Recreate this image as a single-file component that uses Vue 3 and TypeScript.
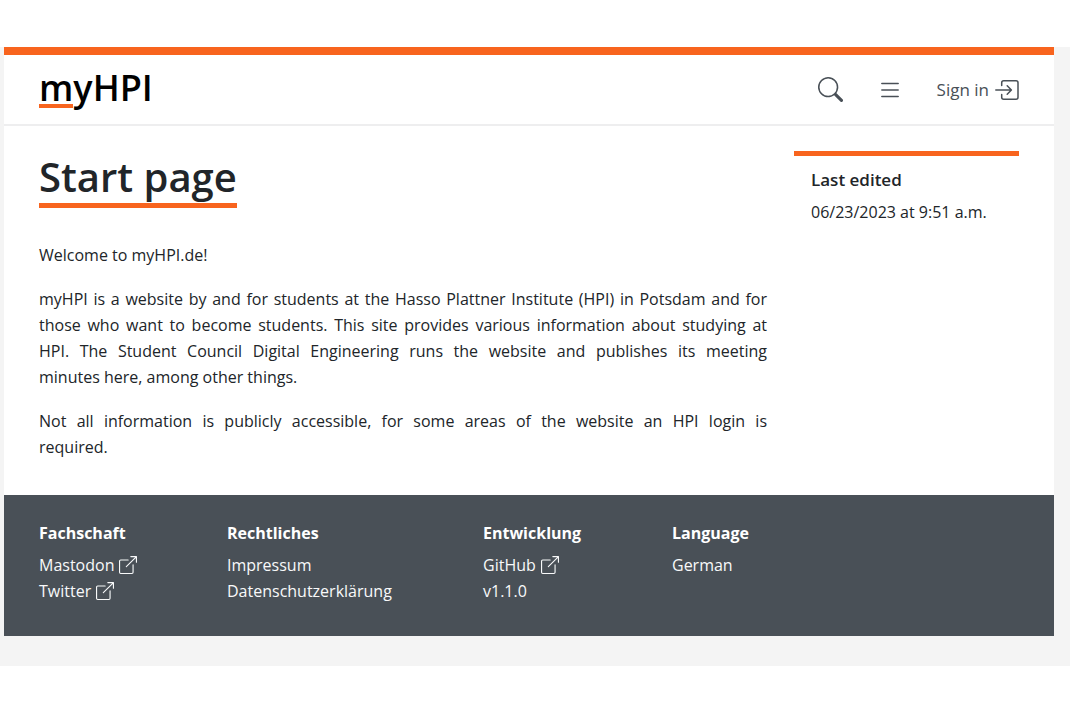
<script setup lang="ts">
interface FooterLink {
  label: string
  external?: boolean
}

interface FooterGroup {
  title: string
  links: FooterLink[]
}

const paragraphs: string[][] = [
  ['Welcome to myHPI.de!'],
  [
    'myHPI is a website by and for students at the Hasso Plattner Institute (HPI) in Potsdam and for those who want to become students. This site provides various information about studying at HPI. The Student Council Digital Engineering runs the website and publishes its meeting',
    'minutes here, among other things.',
  ],
  [
    'Not all information is publicly accessible, for some areas of the website an HPI login is',
    'required.',
  ],
]

const footerGroups: FooterGroup[] = [
  {
    title: 'Fachschaft',
    links: [
      { label: 'Mastodon', external: true },
      { label: 'Twitter', external: true },
    ],
  },
  {
    title: 'Rechtliches',
    links: [{ label: 'Impressum' }, { label: 'Datenschutzerklärung' }],
  },
  {
    title: 'Entwicklung',
    links: [{ label: 'GitHub', external: true }, { label: 'v1.1.0' }],
  },
  { title: 'Language', links: [{ label: 'German' }] },
]
</script>

<template>
  <div class="backdrop">
    <div class="page">
      <header class="header">
        <a class="logo" href="#" aria-label="myHPI"><span class="logo-mark">m</span>yHPI</a>
        <nav class="actions">
          <button class="icon-button" type="button" aria-label="Search">
            <svg width="25" height="25" viewBox="0 0 16 16" fill="currentColor" aria-hidden="true">
              <path d="M11.742 10.344a6.500 6.500 0 1 0-1.397 1.398h-.001c.030.040.062.078.098.115l3.850 3.850a1 1 0 0 0 1.415-1.414l-3.850-3.850a1.007 1.007 0 0 0-.115-.100zM12 6.500a5.500 5.500 0 1 1-11 0 5.500 5.500 0 0 1 11 0z" />
            </svg>
          </button>
          <button class="icon-button" type="button" aria-label="Menu">
            <svg width="26" height="26" viewBox="0 0 16 16" fill="currentColor" aria-hidden="true">
              <path fill-rule="evenodd" d="M2.500 12a.5.5 0 0 1 .5-.5h10a.5.5 0 0 1 0 1H3a.5.5 0 0 1-.5-.5zm0-4a.5.5 0 0 1 .5-.5h10a.5.5 0 0 1 0 1H3a.5.5 0 0 1-.5-.5zm0-4a.5.5 0 0 1 .5-.5h10a.5.5 0 0 1 0 1H3a.5.5 0 0 1-.5-.5z" />
            </svg>
          </button>
          <a class="sign-in" href="#">
            Sign in
            <svg
              width="24"
              height="20"
              viewBox="0 0 24 20"
              fill="none"
              stroke="currentColor"
              stroke-width="1.5"
              stroke-linecap="round"
              stroke-linejoin="round"
              aria-hidden="true"
            >
              <path d="M6.700 5.500V2.800a2 2 0 0 1 2-2H21a2 2 0 0 1 2 2v14.400a2 2 0 0 1-2 2H8.700a2 2 0 0 1-2-2v-2.700" />
              <path d="M.8 10h15.400M12.200 5.800l4.200 4.200-4.200 4.200" />
            </svg>
          </a>
        </nav>
      </header>

      <div class="content">
        <main class="article">
          <h1 class="title">Start page</h1>
          <p v-for="(lines, index) in paragraphs" :key="index">
            <span v-for="line in lines" :key="line" class="line">{{ line }}</span>
          </p>
        </main>
        <aside class="info">
          <h2>Last edited</h2>
          <p>06/23/2023 at 9:51 a.m.</p>
        </aside>
      </div>

      <footer class="footer">
        <section v-for="group in footerGroups" :key="group.title">
          <h2>{{ group.title }}</h2>
          <ul>
            <li v-for="link in group.links" :key="link.label">
              <a href="#">
                {{ link.label }}
                <svg
                  v-if="link.external"
                  width="18"
                  height="18"
                  viewBox="0 0 16 16"
                  fill="currentColor"
                  aria-hidden="true"
                >
                  <path d="M8.636 3.500a.5.5 0 0 0-.5-.5H1.500A1.500 1.500 0 0 0 0 4.500v10A1.500 1.500 0 0 0 1.500 16h10a1.500 1.500 0 0 0 1.500-1.500V7.864a.5.5 0 0 0-1 0V14.500a.5.5 0 0 1-.5.5h-10a.5.5 0 0 1-.5-.5v-10a.5.5 0 0 1 .5-.5h6.636a.5.5 0 0 0 .5-.5z" />
                  <path d="M16 .5a.5.5 0 0 0-.5-.5h-5a.5.5 0 0 0 0 1h3.793L6.146 9.146a.5.5 0 1 0 .708.708L15 1.707V5.500a.5.5 0 0 0 1 0v-5z" />
                </svg>
              </a>
            </li>
          </ul>
        </section>
      </footer>
    </div>
  </div>
</template>

<style>
body {
  margin: 0;
  background: #ffffff;
}
</style>

<style scoped>
.backdrop {
  margin: 47px 0 45px;
  padding: 0 16px 30px 4px;
  background: #f4f4f4;
  color: #212529;
  font-family: "Open Sans", "Noto Sans", sans-serif;
  font-size: 16px;
  line-height: 26px;
}

.page {
  background: #ffffff;
  border-top: 8px solid #f8641e;
}

h1,
h2,
p,
ul {
  margin: 0;
  padding: 0;
}

a {
  color: inherit;
  text-decoration: none;
}

.header {
  display: flex;
  align-items: center;
  justify-content: space-between;
  height: 69px;
  padding: 0 35px;
  border-bottom: 2px solid #eeeeef;
}

.logo {
  display: flex;
  height: 40px;
  color: #000000;
  font-size: 36px;
  font-weight: 600;
  line-height: 36px;
}

.logo-mark {
  height: 34px;
  border-bottom: 4px solid #f8641e;
}

.actions {
  display: flex;
  align-items: center;
  gap: 34px;
  color: #495057;
}

.icon-button {
  display: flex;
  padding: 0;
  border: 0;
  background: none;
  color: inherit;
  cursor: pointer;
}

.sign-in {
  display: flex;
  align-items: center;
  gap: 6px;
  font-size: 17px;
}

.content {
  display: flex;
  align-items: flex-start;
  gap: 27px;
  padding: 25px 35px 35px;
}

.article {
  flex: 1;
  min-width: 0;
  text-align: justify;
}

.title {
  width: fit-content;
  margin-bottom: 34px;
  border-bottom: 5px solid #f8641e;
  font-size: 40px;
  font-weight: 600;
  line-height: 52px;
}

.article p + p {
  margin-top: 18px;
}

.line {
  display: block;
}

.line:not(:last-child) {
  text-align-last: justify;
}

.info {
  box-sizing: border-box;
  flex: 0 0 225px;
  padding: 11px 17px;
  border-top: 5px solid #f8641e;
}

.info h2 {
  margin-bottom: 6px;
  font-size: 17px;
  font-weight: 600;
}

.footer {
  display: grid;
  grid-template-columns: 188fr 256fr 189fr 347fr;
  padding: 25px 35px 32px;
  background: #495057;
  color: #f8f9fa;
}

.footer h2 {
  margin-bottom: 6px;
  color: #ffffff;
  font-size: 16px;
  font-weight: 700;
}

.footer ul {
  list-style: none;
}

.footer a {
  display: flex;
  align-items: center;
  gap: 5px;
}
</style>
